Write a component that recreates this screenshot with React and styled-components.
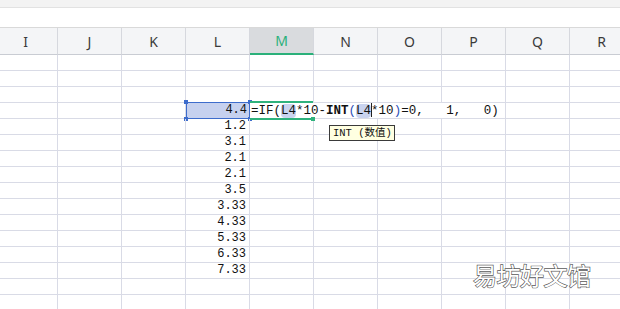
import React from "react";
import styled, { createGlobalStyle, css } from "styled-components";

const Global = createGlobalStyle`
  html, body { margin: 0; padding: 0; background: #fff; overflow: hidden; }
  #root { width: 620px; height: 309px; overflow: hidden; }
`;

const Page = styled.div`
  position: relative;
  width: 620px;
  height: 309px;
  overflow: hidden;
  background: #fff;
`;

const TopStrip = styled.div`
  height: 7px;
  background: #f3f3f3;
  border-bottom: 1px solid #e2e2e2;
`;

const FormulaArea = styled.div`
  height: 19px;
  background: #fff;
  border-bottom: 1px solid #d9d9d9;
`;

const Sheet = styled.div`
  display: grid;
  grid-template-columns: repeat(10, 64px);
  grid-template-rows: 27px;
  grid-auto-rows: 16px;
  margin-left: -6px;
  width: 640px;
`;

const HeaderCell = styled.div`
  height: 27px;
  box-sizing: border-box;
  display: flex;
  align-items: center;
  justify-content: center;
  background: #f4f5f7;
  border-right: 1px solid #d6d8de;
  border-bottom: 1px solid #c9ccd3;
  font-family: "Noto Sans", "Liberation Sans", sans-serif;
  font-size: 14px;
  color: #3a3a3a;
  ${(p) =>
    p.$active &&
    css`
      background: #d9dbde;
      color: #2bb07a;
      border-bottom: 2px solid #2bb07a;
    `}
`;

const Cell = styled.div`
  position: relative;
  box-sizing: border-box;
  height: 16px;
  border-right: 1px solid #d9dbe6;
  border-bottom: 1px solid #d9dbe6;
  font-family: "Liberation Mono", "Noto Sans CJK SC", monospace;
  font-size: 12px;
  line-height: 15px;
  color: #111;
  text-align: right;
  padding-right: 3px;
  white-space: nowrap;
  ${(p) =>
    p.$selected &&
    css`
      background: #c6d1ef;
      border: 1px solid #3d6ccc;
      margin-top: -1px;
      height: 17px;
      line-height: 15px;
      padding-right: 2px;
    `}
  ${(p) =>
    p.$editing &&
    css`
      z-index: 2;
      text-align: left;
      padding: 0;
    `}
`;

const Handle = styled.span`
  position: absolute;
  width: 4px;
  height: 4px;
  background: ${(p) => p.$color};
  ${(p) => (p.$top ? "top: -3px;" : "bottom: -3px;")}
  ${(p) => (p.$left ? "left: -3px;" : "right: -3px;")}
`;

const Editor = styled.div`
  position: absolute;
  left: 0;
  top: 0;
  width: 255px;
  height: 15px;
  background: #fff;
  font-family: "Liberation Mono", "Noto Sans CJK SC", monospace;
  font-size: 12.5px;
  line-height: 15px;
  color: #111;
  padding-left: 1px;
  box-sizing: border-box;
  white-space: pre;
  text-align: left;
`;

const GreenLine = styled.span`
  position: absolute;
  left: 0;
  width: 63px;
  height: 2px;
  background: #2fb27d;
  ${(p) => (p.$top ? "top: -2px;" : "bottom: -2px;")}
`;

const GreenDot = styled.span`
  position: absolute;
  left: 61px;
  bottom: -3px;
  width: 4px;
  height: 4px;
  background: #2fb27d;
`;

const Ref = styled.span`
  background: #c9d3ef;
  border-radius: 4px;
`;

const Bold = styled.span`
  font-weight: bold;
`;

const Paren = styled.span`
  color: ${(p) => (p.$blue ? "#2a4fb8" : "#111")};
`;

const Cursor = styled.span`
  display: inline-block;
  width: 1px;
  height: 14px;
  background: #222;
  vertical-align: -3px;
  margin-right: -1px;
`;

const Tooltip = styled.div`
  position: absolute;
  left: 329px;
  top: 125px;
  width: 66px;
  height: 16px;
  box-sizing: border-box;
  padding: 0 0 0 3px;
  background: #ffffe1;
  border: 1px solid #3a3a3a;
  font-family: "Liberation Mono", "Noto Sans CJK SC", monospace;
  font-size: 10.5px;
  line-height: 14px;
  color: #111;
  white-space: pre;
  overflow: hidden;
`;

const Watermark = styled.div`
  position: absolute;
  left: 473px;
  top: 259px;
  font-family: "Noto Sans CJK SC", sans-serif;
  font-size: 24px;
  letter-spacing: -0.5px;
  color: #fff;
  -webkit-text-stroke: 1.3px #5a5a5a;
  paint-order: stroke fill;
  line-height: 32px;
`;

const columns = ["I", "J", "K", "L", "M", "N", "O", "P", "Q", "R"];
const lValues = {
  3: "4.4",
  4: "1.2",
  5: "3.1",
  6: "2.1",
  7: "2.1",
  8: "3.5",
  9: "3.33",
  10: "4.33",
  11: "5.33",
  12: "6.33",
  13: "7.33",
};
const ROWS = 16;

function Formula() {
  return (
    <Editor>
      =IF<Paren>(</Paren>
      <Ref>L4</Ref>*10-<Bold>INT</Bold>
      <Paren $blue>(</Paren>
      <Ref>L4</Ref>
      <Cursor />
      *10<Paren $blue>)</Paren>=0,   1,   0)
    </Editor>
  );
}

export default function App() {
  const cells = [];
  for (let r = 0; r < ROWS; r++) {
    columns.forEach((c) => {
      const key = `${c}${r}`;
      if (c === "L" && r === 3) {
        cells.push(
          <Cell key={key} $selected>
            {lValues[r]}
            <Handle $color="#3d6ccc" $top $left />
            <Handle $color="#3d6ccc" $top />
            <Handle $color="#3d6ccc" $left />
            <Handle $color="#3d6ccc" />
          </Cell>
        );
      } else if (c === "M" && r === 3) {
        cells.push(
          <Cell key={key} $editing>
            <Formula />
            <GreenLine $top />
            <GreenLine />
            <GreenDot />
          </Cell>
        );
      } else {
        cells.push(<Cell key={key}>{c === "L" ? lValues[r] || "" : ""}</Cell>);
      }
    });
  }

  return (
    <Page>
      <Global />
      <TopStrip />
      <FormulaArea />
      <Sheet>
        {columns.map((c) => (
          <HeaderCell key={c} $active={c === "M"}>
            {c}
          </HeaderCell>
        ))}
        {cells}
      </Sheet>
      <Tooltip>INT (数值)</Tooltip>
      <Watermark>易坊好文馆</Watermark>
    </Page>
  );
}
